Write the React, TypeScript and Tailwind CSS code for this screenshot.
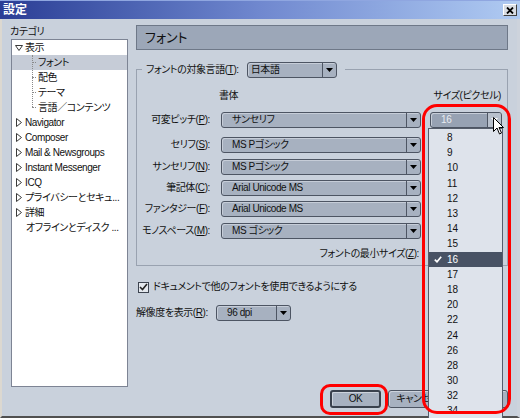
import React from "react";

function Combo({ text, cls, pressed, pl }: { text: string; cls: string; pressed?: boolean; pl?: string }) {
  return (
    <div
      className={`flex h-[16px] shrink-0 rounded-[3px] border border-[#4d5563] ${
        pressed ? "bg-[#97a2b3]" : "bg-[#a7b1c0]"
      } shadow-[inset_1px_1px_0_#c6cdd8] ${cls}`}
    >
      <div
        className={`flex-1 flex items-center overflow-hidden whitespace-nowrap ${pl ?? "pl-[10px]"} ${
          pressed ? "text-[#e8ecf1]" : ""
        }`}
      >
        {text}
      </div>
      <div
        className={`w-[14px] flex items-center justify-center border-l border-[#4d5563] rounded-r-[2px] ${
          pressed ? "bg-[#b8c0cc]" : ""
        }`}
      >
        <svg width="7" height="4" viewBox="0 0 7 4">
          <path d="M0 0H7L3.5 4Z" fill={pressed ? "#ffffff" : "#000000"} />
        </svg>
      </div>
    </div>
  );
}

function TriOpen() {
  return (
    <svg width="8" height="6" viewBox="0 0 8 6">
      <path d="M0.5 0.5H7.5L4 5.5Z" fill="#ffffff" stroke="#3a3a3a" />
    </svg>
  );
}
function TriClosed() {
  return (
    <svg width="6" height="9" viewBox="0 0 6 9">
      <path d="M0.5 0.5V8.5L5.5 4.5Z" fill="#ffffff" stroke="#3a3a3a" />
    </svg>
  );
}

const collapsed = [
  "Navigator",
  "Composer",
  "Mail & Newsgroups",
  "Instant Messenger",
  "ICQ",
  "プライバシーとセキュ...",
  "詳細",
];

const sizes = ["8", "9", "10", "11", "12", "13", "14", "15", "16", "17", "18", "20", "22", "24", "26", "28", "30", "32", "34"];

const fontRows: { label: React.ReactNode; value: string; mt: string }[] = [
  { label: <>可変ピッチ(<u>P</u>):</>, value: "サンセリフ", mt: "mt-[9px]" },
  { label: <>セリフ(<u>S</u>):</>, value: "MS Pゴシック", mt: "mt-[9px]" },
  { label: <>サンセリフ(<u>N</u>):</>, value: "MS Pゴシック", mt: "mt-[6px]" },
  { label: <>筆記体(<u>C</u>):</>, value: "Arial Unicode MS", mt: "mt-[5px]" },
  { label: <>ファンタジー(<u>F</u>):</>, value: "Arial Unicode MS", mt: "mt-[5px]" },
  { label: <>モノスペース(<u>M</u>):</>, value: "MS ゴシック", mt: "mt-[6px]" },
];

export default function App() {
  return (
    <div className="relative w-[520px] h-[418px] overflow-hidden flex flex-col bg-[#c9d1dc] text-[#111] text-[10px] tracking-[-0.4px] leading-none font-['Liberation_Sans','Noto_Sans_CJK_JP',sans-serif] [font-feature-settings:'palt']">
      {/* Title bar */}
      <div className="h-[19px] shrink-0 flex items-center pl-[3px] bg-linear-to-r from-[#2b3d95] via-[#7088cf] to-[#b0cbf2] border-t border-[#8fa6e0]">
        <span className="text-white font-bold text-[12px] tracking-normal">設定</span>
        <div className="ml-auto mr-[3px] w-[14px] h-[12px] bg-[#d9dde3] border border-t-[#ffffff] border-l-[#ffffff] border-r-[#404040] border-b-[#404040] flex items-center justify-center">
          <svg width="8" height="7" viewBox="0 0 8 7">
            <path d="M1 0.5L7 6.5M7 0.5L1 6.5" stroke="#000" strokeWidth="1.8" />
          </svg>
        </div>
      </div>

      {/* Body */}
      <div className="flex flex-1 border-l-2 border-l-[#dcd8d0] border-r-[3px] border-r-[#cdd3dc] border-b-2 border-b-[#505050]">
        {/* Left column */}
        <div className="ml-[9px] w-[117px] flex flex-col shrink-0">
          <div className="mt-[5px] h-[15px] flex items-center -ml-[1px]">カテゴリ</div>
          <div className="h-[348px] border border-[#7d8494] bg-white flex flex-col whitespace-nowrap overflow-hidden">
            <div className="h-[15px] flex items-center pl-[3px]">
              <span className="w-[10px] flex items-center">
                <TriOpen />
              </span>
              <span>表示</span>
            </div>
            <div className="relative">
              <div className="absolute left-[20px] top-0 h-[52px] border-l border-dotted border-[#8a8a8a]" />
              {["フォント", "配色", "テーマ", "言語／コンテンツ"].map((t, i) => (
                <div
                  key={t}
                  className={`h-[15px] flex items-center pl-[20px] ${i === 0 ? "bg-[#c6ccd7]" : ""}`}
                >
                  <span className="w-[4px] border-t border-dotted border-[#8a8a8a]" />
                  <span className="ml-[2px]">{t}</span>
                </div>
              ))}
            </div>
            {collapsed.map((t) => (
              <div key={t} className="h-[15px] flex items-center pl-[4px]">
                <span className="w-[9px] flex items-center">
                  <TriClosed />
                </span>
                <span>{t}</span>
              </div>
            ))}
            <div className="h-[15px] flex items-center pl-[14px]">オフラインとディスク ...</div>
          </div>
        </div>

        {/* Right column */}
        <div className="ml-[8px] w-[372px] flex flex-col shrink-0">
          <div className="mt-[6px] h-[25px] border border-[#6e7888] bg-[#9ca7b8] flex items-center pl-[8px] text-[13px] tracking-normal">
            フォント
          </div>

          <fieldset className="mt-[11px] h-[205px] border border-[#99a2b0] p-0 m-0 min-w-0">
            <legend className="ml-[5px] pl-[4px] pr-[8px]">
              <span className="flex items-center h-[17px]">
                <span className="whitespace-nowrap">
                  フォントの対象言語(<u>T</u>):
                </span>
                <Combo text="日本語" cls="ml-[8px] w-[90px]" pl="pl-[3px]" />
              </span>
            </legend>

            <div className="mt-[11px] h-[14px] flex items-center">
              <span className="ml-[82px]">書体</span>
              <span className="ml-auto mr-[6px]">サイズ(ピクセル)</span>
            </div>

            {fontRows.map((r, i) => (
              <div key={i} className={`h-[16px] flex items-center ${r.mt}`}>
                <span className="w-[73px] text-right whitespace-nowrap">{r.label}</span>
                <Combo text={r.value} cls="ml-[11px] w-[200px]" />
                {i === 0 && <Combo text="16" cls="ml-[9px] w-[72px]" pressed />}
              </div>
            ))}

            <div className="mt-[7px] h-[16px] flex items-center">
              <span className="w-[282px] text-right whitespace-nowrap">
                フォントの最小サイズ(<u>Z</u>):
              </span>
            </div>
          </fieldset>

          <div className="mt-[14px] h-[14px] flex items-center">
            <span className="ml-[2px] w-[11px] h-[11px] border border-[#3d4450] bg-[#e4e8ee] flex items-center justify-center">
              <svg width="9" height="8" viewBox="0 0 9 8">
                <path d="M1 4L3.5 6.5L8 1" stroke="#222" strokeWidth="1.6" fill="none" />
              </svg>
            </span>
            <span className="ml-[4px] whitespace-nowrap">ドキュメントで他のフォントを使用できるようにする</span>
          </div>

          <div className="mt-[11px] h-[15px] flex items-center">
            <span className="w-[80px] whitespace-nowrap">
              解像度を表示(<u>R</u>):
            </span>
            <Combo text="96 dpi" cls="w-[75px] h-[15px]" />
          </div>

          <div className="mt-auto mb-[8px] flex justify-end gap-[7px]">
            <div className="w-[51px] h-[18px] rounded-[3px] border-2 border-[#3a414d] bg-[#a7b1c0] shadow-[inset_1px_1px_0_#cdd3dc] flex items-center justify-center">
              OK
            </div>
            <div className="w-[60px] h-[18px] rounded-[3px] border border-[#4d5563] bg-[#a7b1c0] shadow-[inset_1px_1px_0_#cdd3dc] flex items-center justify-center whitespace-nowrap">
              キャンセル
            </div>
            <div className="w-[53px] h-[18px] rounded-[3px] border border-[#4d5563] bg-[#a7b1c0] shadow-[inset_1px_1px_0_#cdd3dc] flex items-center justify-center">
              ヘルプ
            </div>
          </div>
        </div>
      </div>

      {/* Open size dropdown list */}
      <div className="absolute left-[428px] top-[128px] w-[75px] h-[300px] border border-[#555d6b] bg-[#dee3eb] pt-[1.5px] tracking-normal">
        {sizes.map((s) => (
          <div
            key={s}
            className={`h-[15.2px] flex items-center ${s === "16" ? "bg-[#485264] text-white" : ""}`}
          >
            <span className="w-[18px] flex justify-center">
              {s === "16" && (
                <svg width="8" height="7" viewBox="0 0 8 7">
                  <path d="M0.8 3.6L3 5.8L7.2 0.8" stroke="#ffffff" strokeWidth="1.7" fill="none" />
                </svg>
              )}
            </span>
            <span>{s}</span>
          </div>
        ))}
      </div>

      {/* Red highlight marks */}
      <div className="absolute left-[422px] top-[104px] w-[89px] h-[310px] border-[3px] border-[#ff0000] rounded-[15px]" />
      <div className="absolute left-[320px] top-[384px] w-[68px] h-[31px] border-[3px] border-[#ff0000] rounded-[10px]" />

      {/* Mouse cursor */}
      <svg className="absolute left-[493px] top-[117px]" width="12" height="19" viewBox="0 0 12 19">
        <path d="M0.5 0.5V14.5L4 11L6.5 17L8.5 16L6 10.5H10.5Z" fill="#ffffff" stroke="#000000" />
      </svg>
    </div>
  );
}
